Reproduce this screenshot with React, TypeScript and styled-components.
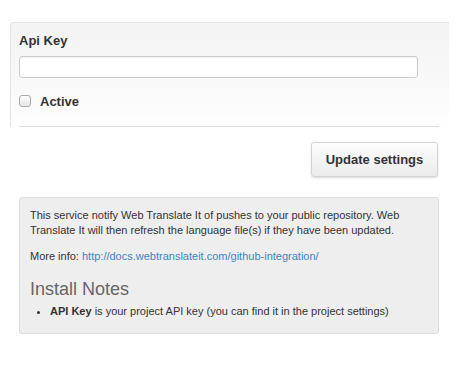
import React from 'react'
import styled, { createGlobalStyle } from 'styled-components'

const GlobalStyle = createGlobalStyle`
  body {
    margin: 0;
    background: #fff;
    font-family: "Liberation Sans", Arial, Helvetica, sans-serif;
    color: #333;
  }
`

const Page = styled.div`
  padding: 22px 0 0 10px;
  width: 476px;
  box-sizing: border-box;
`

const Panel = styled.div`
  width: 439px;
  box-sizing: border-box;
  padding: 10px 10px 0 8px;
  border-top: 1px solid #e3e3e3;
  border-left: 1px solid #e3e3e3;
  border-top-left-radius: 4px;
  background: linear-gradient(#f3f3f3, #fafafa 70%, #fff);
`

const Label = styled.div`
  font-size: 13px;
  line-height: 16px;
  font-weight: bold;
  color: #333;
`

const TextInput = styled.input`
  display: block;
  margin-top: 7px;
  width: 399px;
  height: 22px;
  box-sizing: border-box;
  border: 1px solid #ccc;
  border-radius: 3px;
  background: #fff;
  box-shadow: inset 0 1px 2px rgba(0, 0, 0, 0.06);
`

const CheckRow = styled.label`
  display: flex;
  align-items: center;
  gap: 9px;
  margin-top: 16px;
  height: 14px;
  font-size: 13px;
  font-weight: bold;
  color: #333;
`

const Check = styled.span`
  display: inline-block;
  width: 10px;
  height: 10px;
  border: 1px solid #aaa;
  border-radius: 3px;
  background: linear-gradient(#fdfdfd, #e6e6e6);
`

const Divider = styled.div`
  margin-top: 18px;
  border-bottom: 1px solid #ddd;
`

const Body = styled.div`
  padding-left: 9px;
  width: 420px;
`

const Actions = styled.div`
  display: flex;
  justify-content: flex-end;
  padding-right: 1px;
  margin-top: 15px;
`

const Button = styled.button`
  width: 127px;
  height: 35px;
  box-sizing: border-box;
  border: 1px solid #d4d4d4;
  border-radius: 3px;
  background: linear-gradient(#fcfcfc, #ececec);
  box-shadow: 0 1px 2px rgba(0, 0, 0, 0.15);
  font-family: "Liberation Sans", Arial, sans-serif;
  font-size: 13px;
  font-weight: bold;
  color: #333;
`

const InfoBox = styled.div`
  margin-top: 20px;
  width: 420px;
  box-sizing: border-box;
  padding: 10px 10px 14px 10px;
  background: #eee;
  border: 1px solid #ddd;
  border-radius: 3px;
  font-size: 11px;
  line-height: 15px;
  color: #333;

  p {
    margin: 0 0 11px;
  }
`

const Link = styled.a`
  color: #4183c4;
  text-decoration: none;
`

const NotesTitle = styled.h3`
  margin: 14px 0 4px;
  font-size: 18px;
  line-height: 22px;
  font-weight: normal;
  color: #666;
`

const Notes = styled.ul`
  margin: 0;
  padding-left: 20px;

  li {
    line-height: 15px;
  }
`

export default function App() {
  return (
    <Page>
      <GlobalStyle />
      <Panel>
        <Label>Api Key</Label>
        <TextInput type="text" />
        <CheckRow>
          <Check />
          Active
        </CheckRow>
        <Divider />
      </Panel>
      <Body>
        <Actions>
          <Button>Update settings</Button>
        </Actions>
        <InfoBox>
          <p>
            This service notify Web Translate It of pushes to your public repository. Web
            Translate It will then refresh the language file(s) if they have been updated.
          </p>
          <p>
            More info:{' '}
            <Link href="#">http://docs.webtranslateit.com/github-integration/</Link>
          </p>
          <NotesTitle>Install Notes</NotesTitle>
          <Notes>
            <li>
              <b>API Key</b> is your project API key (you can find it in the project settings)
            </li>
          </Notes>
        </InfoBox>
      </Body>
    </Page>
  )
}
